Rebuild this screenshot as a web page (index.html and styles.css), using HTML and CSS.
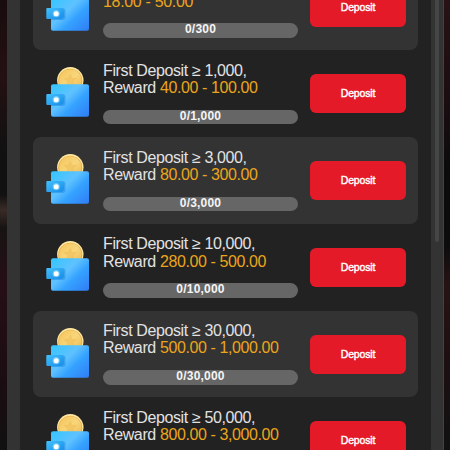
FILE: index.html
```
<!DOCTYPE html>
<html lang="en">
<head>
<meta charset="utf-8">
<title>Deposit rewards</title>
<link rel="stylesheet" href="styles.css">
</head>
<body>
<svg class="defs" aria-hidden="true">
  <defs>
    <linearGradient id="blue" x1="0" y1="0.1" x2="1" y2="1"><stop offset="0" stop-color="#38c5ff"/><stop offset=".38" stop-color="#5fc2ff"/><stop offset=".6" stop-color="#35a2ff"/><stop offset="1" stop-color="#307cf6"/></linearGradient>
    <linearGradient id="clasp" x1="0" y1="0" x2="1" y2="1"><stop offset="0" stop-color="#43c1fc"/><stop offset="1" stop-color="#168be8"/></linearGradient>
    <linearGradient id="gold" x1="0" y1="0" x2="1" y2="1"><stop offset="0" stop-color="#f5c458"/><stop offset=".5" stop-color="#f8d67c"/><stop offset="1" stop-color="#edb44c"/></linearGradient>
    <symbol id="wallet" viewBox="0 0 44 52">
      <circle cx="24.3" cy="14.3" r="13.2" fill="#ffe8a0"/>
      <circle cx="24.3" cy="14.8" r="12" fill="#e2a94c"/>
      <circle cx="24.3" cy="14.5" r="11.2" fill="url(#gold)"/>
      <path d="M24.3 7.5l2 4.2 4.7.6-3.5 3.2.9 4.6-4.1-2.3-4.2 2.3.9-4.6-3.4-3.2 4.6-.6z" fill="#eeb54c" opacity=".45"/>
      <rect x="5" y="18.2" width="38" height="32.6" rx="2" fill="url(#blue)"/>
      <path d="M5 28h11q3.500 0 3.500 3.500v5q0 3.500-3.500 3.500H5z" fill="#147fdd" opacity=".45"/>
      <path d="M1.300 28H14q4 0 4 4v3q0 4-4 4H1.300Q.3 39 .3 38v-9q0-1 1-1z" fill="url(#clasp)"/>
      <circle cx="10.200" cy="33.700" r="3.600" fill="#8cd8ff" opacity=".65"/>
      <circle cx="10.200" cy="33.700" r="2.500" fill="#fff"/>
    </symbol>
  </defs>
</svg>
<main class="panel">
  <div class="list">
    <section class="reward shaded">
      <svg class="wallet"><use href="#wallet"/></svg>
      <div class="details"><p><span>18.00 - 50.00</span></p><div class="progress">0/300</div></div>
      <button>Deposit</button>
    </section>
    <section class="reward">
      <svg class="wallet"><use href="#wallet"/></svg>
      <div class="details"><p>First Deposit ≥ 1,000,<br>Reward <span>40.00 - 100.00</span></p><div class="progress">0/1,000</div></div>
      <button>Deposit</button>
    </section>
    <section class="reward shaded">
      <svg class="wallet"><use href="#wallet"/></svg>
      <div class="details"><p>First Deposit ≥ 3,000,<br>Reward <span>80.00 - 300.00</span></p><div class="progress">0/3,000</div></div>
      <button>Deposit</button>
    </section>
    <section class="reward">
      <svg class="wallet"><use href="#wallet"/></svg>
      <div class="details"><p>First Deposit ≥ 10,000,<br>Reward <span>280.00 - 500.00</span></p><div class="progress">0/10,000</div></div>
      <button>Deposit</button>
    </section>
    <section class="reward shaded">
      <svg class="wallet"><use href="#wallet"/></svg>
      <div class="details"><p>First Deposit ≥ 30,000,<br>Reward <span>500.00 - 1,000.00</span></p><div class="progress">0/30,000</div></div>
      <button>Deposit</button>
    </section>
    <section class="reward">
      <svg class="wallet"><use href="#wallet"/></svg>
      <div class="details"><p>First Deposit ≥ 50,000,<br>Reward <span>800.00 - 3,000.00</span></p></div>
      <button>Deposit</button>
    </section>
  </div>
  <div class="track"><div class="thumb"></div></div>
</main>
</body>
</html>
```
FILE: styles.css
```
* { box-sizing: border-box; }
html, body { height: 100%; overflow: hidden; }
body {
  margin: 0;
  padding: 0 6px 0 7px;
  font-family: "Liberation Sans", Arial, sans-serif;
  background:
    linear-gradient(180deg, #180c0e 0, #241012 75px, #111 150px, #111 195px, #392b26 210px, #171313 228px, #260e16 285px, #180d11 400px, #111 450px) 0 0 / 7px 100% no-repeat,
    linear-gradient(180deg, #281215 0, #1b0d10 100px, #0b0b0c 170px, #0c0c0d 245px, #281314 285px, #1d0f11 360px, #111 450px) 100% 0 / 7px 100% no-repeat,
    #111;
}
.defs { position: absolute; width: 0; height: 0; }
.panel {
  display: flex;
  height: 450px;
  background: #333;
  padding-left: 13px;
  border-right: 1px solid #414343;
}
.list {
  width: 411px;
  height: 450px;
  flex: none;
  display: flex;
  flex-direction: column;
  justify-content: flex-end;
  padding: 0 13px;
  background: #222;
  overflow: hidden;
}
.reward {
  display: flex;
  flex: none;
  height: 86.75px;
  padding: 11.5px 12px 0 13px;
  border-radius: 8px;
}
.reward:last-child { margin-bottom: -34px; }
.shaded { background: #333; }
.wallet { width: 44px; height: 52px; flex: none; margin-top: 4.5px; }
.details { width: 195px; margin-left: 13px; flex: none; }
.details p {
  height: 48px;
  margin: 0;
  color: #e2e2e2;
  font-size: 16px;
  line-height: 17.3px;
  letter-spacing: -.38px;
  white-space: nowrap;
}
.details span { color: #eba51c; letter-spacing: -.4px; }
.reward:first-child p { padding-top: 18.3px; }
.reward:first-child span { letter-spacing: -.32px; }
.progress {
  height: 14.5px;
  border-radius: 8px;
  background: #666;
  color: #f5f5f5;
  font-size: 12px;
  line-height: 13.5px;
  font-weight: bold;
  letter-spacing: .2px;
  text-align: center;
}
button {
  width: 96px;
  height: 39px;
  margin: 12.5px 0 0 12px;
  padding: 0;
  border: 0;
  border-radius: 6px;
  background: #e51a28;
  color: #fff;
  font: 10.5px/37px "Liberation Sans", Arial, sans-serif;
  -webkit-text-stroke: .4px #fff;
  letter-spacing: -.15px;
  flex: none;
}
.track { flex: 1; padding-left: 4px; }
.thumb { width: 4px; height: 242px; border-radius: 0 0 2px 2px; background: #454646; }
```
